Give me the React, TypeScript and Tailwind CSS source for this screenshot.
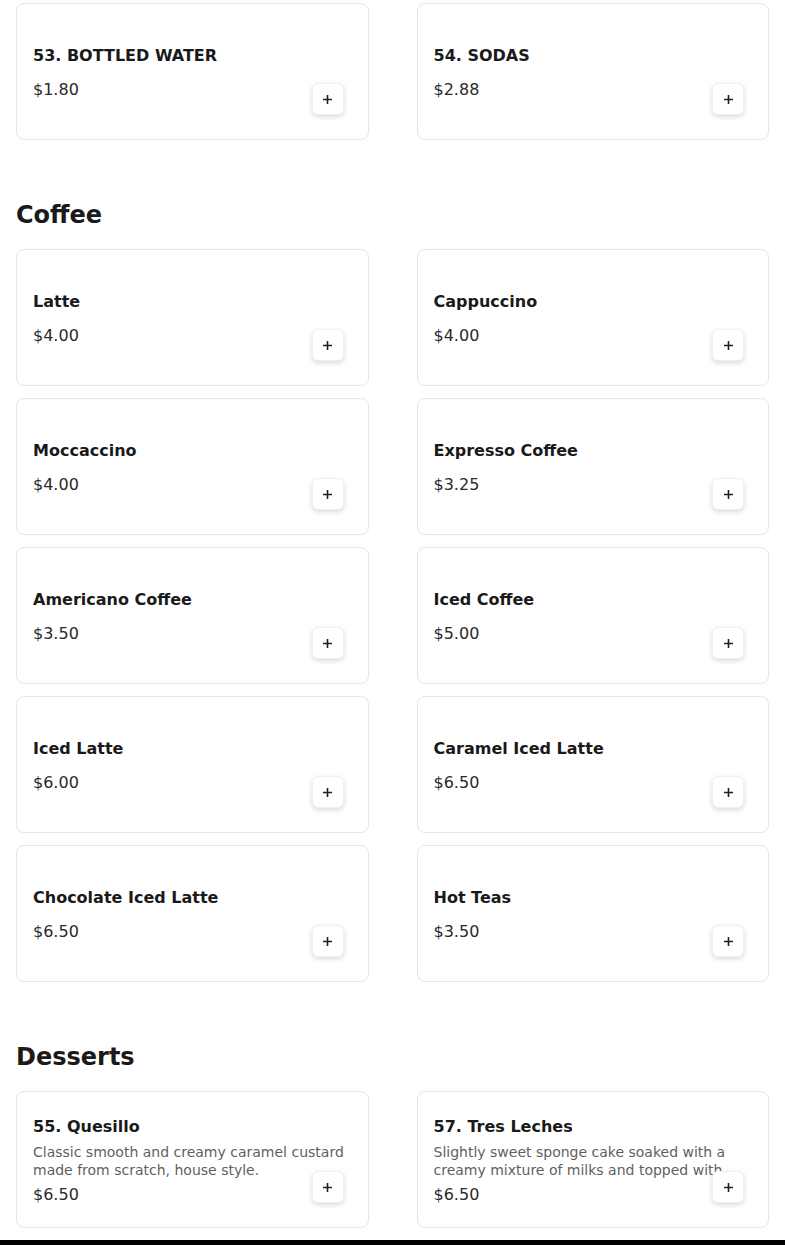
import React from "react";

type Item = { name: string; price: string; desc?: string };

const drinks: Item[] = [
  { name: "53. BOTTLED WATER", price: "$1.80" },
  { name: "54. SODAS", price: "$2.88" },
];

const coffee: Item[] = [
  { name: "Latte", price: "$4.00" },
  { name: "Cappuccino", price: "$4.00" },
  { name: "Moccaccino", price: "$4.00" },
  { name: "Expresso Coffee", price: "$3.25" },
  { name: "Americano Coffee", price: "$3.50" },
  { name: "Iced Coffee", price: "$5.00" },
  { name: "Iced Latte", price: "$6.00" },
  { name: "Caramel Iced Latte", price: "$6.50" },
  { name: "Chocolate Iced Latte", price: "$6.50" },
  { name: "Hot Teas", price: "$3.50" },
];

const desserts: Item[] = [
  {
    name: "55. Quesillo",
    price: "$6.50",
    desc: "Classic smooth and creamy caramel custard made from scratch, house style.",
  },
  {
    name: "57. Tres Leches",
    price: "$6.50",
    desc: "Slightly sweet sponge cake soaked with a creamy mixture of milks and topped with whipped cream and cinnamon.",
  },
];

function PlusIcon() {
  return (
    <svg width="11" height="11" viewBox="0 0 11 11" fill="none">
      <path d="M5.5 1v9M1 5.5h9" stroke="#1f1f1f" strokeWidth="1.6" />
    </svg>
  );
}

function Card({ item }: { item: Item }) {
  return (
    <div className="relative flex h-[137px] flex-col justify-center rounded-lg border border-[#e5e5e5] bg-white px-4 pt-[3px]">
      <div className="text-base leading-6 font-bold text-[#1a1a1a]">{item.name}</div>
      {item.desc && (
        <p className="mt-[5px] line-clamp-2 text-sm leading-[17.5px] text-[#5f5f5f]">{item.desc}</p>
      )}
      <div className={`${item.desc ? "mt-[4px]" : "mt-[10px]"} text-base leading-6 text-[#2a2a2a]`}>
        {item.price}
      </div>
      <button className="absolute right-6 bottom-6 flex h-8 w-8 items-center justify-center rounded-md border border-[#f0f0f0] bg-white shadow-[0_2px_5px_rgba(0,0,0,0.15)]">
        <PlusIcon />
      </button>
    </div>
  );
}

function Grid({ items }: { items: Item[] }) {
  return (
    <div className="grid grid-cols-2 gap-x-12 gap-y-3">
      {items.map((it) => (
        <Card key={it.name} item={it} />
      ))}
    </div>
  );
}

function Section({ title, items }: { title: string; items: Item[] }) {
  return (
    <section className="mt-[59px]">
      <h2 className="mb-[18px] text-2xl leading-8 font-bold text-[#1a1a1a]">{title}</h2>
      <Grid items={items} />
    </section>
  );
}

export default function App() {
  return (
    <div className="min-h-[1245px] overflow-hidden bg-white" style={{ fontFamily: '"DejaVu Sans", sans-serif' }}>
      <div className="px-4 pt-[3px]">
        <Grid items={drinks} />
        <Section title="Coffee" items={coffee} />
        <Section title="Desserts" items={desserts} />
      </div>
      <div className="mt-3 h-16 w-full bg-black" />
    </div>
  );
}
